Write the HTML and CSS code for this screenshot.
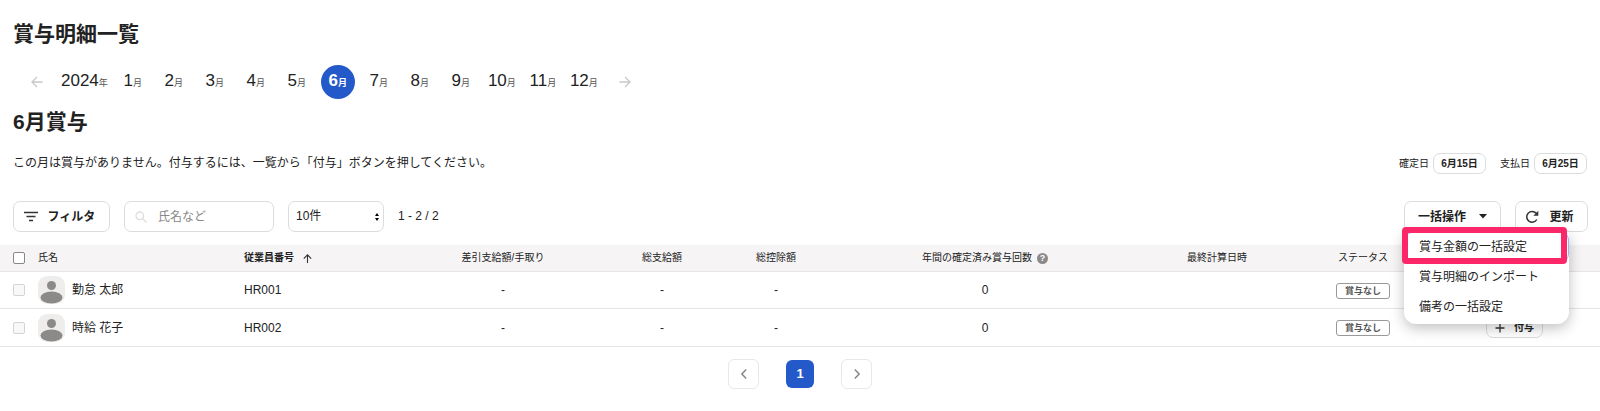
FILE: index.html
```html
<!DOCTYPE html>
<html lang="ja">
<head>
<meta charset="utf-8">
<title>賞与明細一覧</title>
<meta name="viewport" content="width=device-width, initial-scale=1">
<link rel="stylesheet" href="styles.css">
</head>
<body>
<svg class="defs" aria-hidden="true">
  <symbol id="avatar" viewBox="0 0 27 28">
    <rect width="27" height="28" rx="9" fill="#eeedeb"/>
    <circle cx="13.500" cy="9.500" r="4.500" fill="#8c8989"/>
    <ellipse cx="13.500" cy="21.500" rx="11" ry="6" fill="#8c8989"/>
  </symbol>
  <symbol id="plus" viewBox="0 0 10 10">
    <path d="M5 .5v9M.5 5h9" fill="none" stroke="#333" stroke-width="1.300"/>
  </symbol>
</svg>
<main class="page">
  <h1 class="title">賞与明細一覧</h1>

  <nav class="months" aria-label="対象月">
    <button class="month-arrow" aria-label="前の年"><svg width="12" height="12" viewBox="0 0 12 12"><path d="M11.500 6H1M6 1 1 6l5 5"/></svg></button>
    <span class="year">2024<small>年</small></span>
    <button class="month">1<small>月</small></button>
    <button class="month">2<small>月</small></button>
    <button class="month">3<small>月</small></button>
    <button class="month">4<small>月</small></button>
    <button class="month">5<small>月</small></button>
    <button class="month month-current" aria-current="true">6<small>月</small></button>
    <button class="month">7<small>月</small></button>
    <button class="month">8<small>月</small></button>
    <button class="month">9<small>月</small></button>
    <button class="month">10<small>月</small></button>
    <button class="month">11<small>月</small></button>
    <button class="month">12<small>月</small></button>
    <button class="month-arrow" aria-label="次の年"><svg width="12" height="12" viewBox="0 0 12 12"><path d="M.5 6H11M6 1l5 5-5 5"/></svg></button>
  </nav>

  <h2 class="title">6月賞与</h2>

  <div class="summary">
    <p class="lead">この月は賞与がありません。付与するには、一覧から「付与」ボタンを押してください。</p>
    <div class="dates">
      <span class="date"><span id="fix-date">確定日</span><button class="btn btn-small" aria-describedby="fix-date">6月15日</button></span>
      <span class="date"><span id="pay-date">支払日</span><button class="btn btn-small" aria-describedby="pay-date">6月25日</button></span>
    </div>
  </div>

  <div class="toolbar">
    <button class="btn filter"><svg width="14" height="11" viewBox="0 0 14 11"><path d="M0 1.500h14M2.500 5.500h9M5 9.500h4" stroke="#333" stroke-width="1.600"/></svg>フィルタ</button>
    <label class="search">
      <svg width="12" height="12" viewBox="0 0 12 12"><circle cx="4.800" cy="4.800" r="3.800"/><path d="m7.800 7.800 3.700 3.700"/></svg>
      <input type="search" placeholder="氏名など" aria-label="氏名などで検索">
    </label>
    <div class="per-page">
      <select aria-label="表示件数"><option>10件</option><option>20件</option><option>50件</option></select>
      <svg width="4" height="8" viewBox="0 0 4 8"><path d="M2 0l2 3H0zM2 8 0 5h4z"/></svg>
    </div>
    <span class="range">1 - 2 / 2</span>
    <div class="bulk">
      <button class="btn bulk-button" aria-haspopup="menu" aria-expanded="true">一括操作<svg width="8" height="5" viewBox="0 0 8 5"><path d="M0 0h8L4 4.500z" fill="#222"/></svg></button>
      <div class="menu" role="menu">
        <button class="menu-item menu-item-marked" role="menuitem">賞与金額の一括設定</button>
        <button class="menu-item" role="menuitem">賞与明細のインポート</button>
        <button class="menu-item" role="menuitem">備考の一括設定</button>
      </div>
    </div>
    <button class="btn refresh"><svg width="14" height="14" viewBox="0 0 14 14"><path d="M11.800 9.500A5.400 5.400 0 1 1 11.200 3.300L12.500 4.800" fill="none" stroke="#333" stroke-width="1.500"/><path d="M13.300.8v5H8.300z" fill="#333"/></svg>更新</button>
  </div>

  <table class="grid">
    <colgroup>
      <col class="c-check"><col class="c-name"><col class="c-number"><col class="c-net"><col class="c-amount"><col class="c-amount"><col class="c-count"><col class="c-time"><col class="c-status"><col class="c-action">
    </colgroup>
    <thead>
      <tr>
        <th class="check"><input type="checkbox" aria-label="すべて選択"></th>
        <th class="left">氏名</th>
        <th class="left sorted" aria-sort="ascending"><span class="th-inner">従業員番号<svg width="9" height="9" viewBox="0 0 9 9"><path d="M4.500 9V1M.8 4.600 4.500.9l3.700 3.700" fill="none" stroke="#333" stroke-width="1.100"/></svg></span></th>
        <th>差引支給額/手取り</th>
        <th>総支給額</th>
        <th>総控除額</th>
        <th><span class="th-inner th-help">年間の確定済み賞与回数<button class="help" aria-label="ヘルプ">?</button></span></th>
        <th>最終計算日時</th>
        <th>ステータス</th>
        <th></th>
      </tr>
    </thead>
    <tbody>
      <tr>
        <td class="check"><input type="checkbox" aria-label="勤怠 太郎を選択" disabled></td>
        <td class="left"><span class="person"><svg width="27" height="28"><use href="#avatar"/></svg>勤怠 太郎</span></td>
        <td class="left">HR001</td>
        <td>-</td><td>-</td><td>-</td><td>0</td><td></td>
        <td><span class="badge">賞与なし</span></td>
        <td><button class="btn btn-small grant"><svg width="10" height="10"><use href="#plus"/></svg>付与</button></td>
      </tr>
      <tr>
        <td class="check"><input type="checkbox" aria-label="時給 花子を選択" disabled></td>
        <td class="left"><span class="person"><svg width="27" height="28"><use href="#avatar"/></svg>時給 花子</span></td>
        <td class="left">HR002</td>
        <td>-</td><td>-</td><td>-</td><td>0</td><td></td>
        <td><span class="badge">賞与なし</span></td>
        <td><button class="btn btn-small grant"><svg width="10" height="10"><use href="#plus"/></svg>付与</button></td>
      </tr>
    </tbody>
  </table>

  <nav class="pager" aria-label="ページ">
    <button class="pager-step" aria-label="前へ"><svg width="6" height="10" viewBox="0 0 6 10"><path d="M5.200.6.9 5l4.300 4.400"/></svg></button>
    <button class="pager-current" aria-current="page">1</button>
    <button class="pager-step" aria-label="次へ"><svg width="6" height="10" viewBox="0 0 6 10"><path d="M.8.6 5.100 5 .8 9.400"/></svg></button>
  </nav>
</main>
</body>
</html>
```

FILE: styles.css
```css
*,
*::after {
  box-sizing: border-box;
}

body {
  margin: 0;
  background: #fff;
  color: #222;
  font: 12px/18px "Liberation Sans", "Noto Sans CJK JP", sans-serif;
}

button,
input,
select {
  margin: 0;
  color: inherit;
  font: inherit;
}

button {
  padding: 0;
  border: 0;
  background: none;
  cursor: pointer;
}

svg {
  display: block;
  flex: none;
}

.defs {
  position: absolute;
  width: 0;
  height: 0;
}

.page {
  padding-top: 20px;
}

.title {
  margin: 0;
  padding: 0 13px;
  font-size: 21px;
  line-height: 28px;
}

/* Month switcher */
.months {
  display: flex;
  align-items: center;
  gap: 7px;
  margin: 17px 0 9px;
  padding-left: 20px;
}

.month,
.month-arrow {
  width: 34px;
  height: 34px;
  border-radius: 50%;
  white-space: nowrap;
}

.year,
.month {
  font-size: 17px;
}

.year {
  margin-right: 1px;
}

.months small {
  color: #555;
  font-size: 9px;
}

.month-current,
.month-current small {
  background: #2459c9;
  color: #fff;
  font-weight: bold;
}

.months .month-current small {
  color: #fff;
}

.month-arrow {
  display: grid;
  place-items: center;
}

.month-arrow path {
  fill: none;
  stroke: #c8c8c8;
  stroke-width: 1.300;
}

/* Buttons */
.btn {
  display: inline-flex;
  align-items: center;
  justify-content: center;
  height: 31px;
  border: 1px solid #dcdcdc;
  border-radius: 7px;
  background: #fff;
  font-weight: bold;
  white-space: nowrap;
}

.btn-small {
  height: 21px;
  padding: 0 7px;
  font-size: 10px;
}

/* Description and dates */
.summary {
  display: flex;
  align-items: flex-end;
  justify-content: space-between;
  margin-top: 17px;
  padding: 0 13px;
}

.lead {
  margin: 0 0 2px;
}

.dates {
  display: flex;
  gap: 14px;
  font-size: 10px;
}

.date {
  display: flex;
  align-items: center;
  gap: 4px;
}

.date .btn {
  width: 53px;
}

/* Toolbar */
.toolbar {
  display: flex;
  align-items: center;
  gap: 14px;
  margin: 27px 0 13px;
  padding: 0 12px 0 13px;
}

.filter {
  gap: 10px;
  width: 97px;
  padding-right: 4px;
}

.search {
  display: flex;
  align-items: center;
  gap: 11px;
  width: 150px;
  height: 31px;
  padding: 0 10px;
  border: 1px solid #dcdcdc;
  border-radius: 7px;
}

.search svg {
  fill: none;
  stroke: #ddd;
  stroke-width: 1.300;
}

.search input {
  flex: 1;
  min-width: 0;
  padding: 0;
  border: 0;
  outline: 0;
  background: none;
}

.search input::placeholder {
  color: #888;
}

.per-page {
  display: grid;
  align-items: center;
  width: 96px;
}

.per-page select,
.per-page svg {
  grid-area: 1 / 1;
}

.per-page select {
  width: 100%;
  height: 31px;
  padding: 0 7px 2px;
  border: 1px solid #dcdcdc;
  border-radius: 7px;
  appearance: none;
  background: #fff;
}

.per-page svg {
  justify-self: end;
  margin-right: 5px;
  pointer-events: none;
}

.range {
  padding-bottom: 2px;
}

.bulk {
  position: relative;
  margin-left: auto;
}

.bulk-button {
  gap: 13px;
  width: 97px;
}

.refresh {
  gap: 10px;
  width: 73px;
  padding-right: 4px;
}

.menu {
  position: absolute;
  z-index: 1;
  top: 31px;
  left: 0;
  width: 165px;
  padding-bottom: 2px;
  border-radius: 0 0 12px 12px;
  background: #fff;
  box-shadow: 0 4px 14px rgba(0, 0, 0, 0.25);
}

.menu-item {
  display: block;
  width: 100%;
  height: 30px;
  padding: 0 15px;
  text-align: left;
  white-space: nowrap;
}

.menu-item-marked {
  border-radius: 8px;
  box-shadow: inset 0 0 0 1px #9bb4ee;
}

.menu-item-marked::after {
  position: absolute;
  top: -5px;
  left: -2px;
  width: 165px;
  height: 37px;
  border: 6px solid #fb2768;
  border-radius: 4px;
  content: "";
  pointer-events: none;
}

/* Table */
.grid {
  width: 100%;
  border-spacing: 0;
  table-layout: fixed;
}

.c-check { width: 38px; }
.c-name { width: 206px; }
.c-number { width: 157px; }
.c-net { width: 204px; }
.c-amount { width: 114px; }
.c-count { width: 304px; }
.c-time { width: 160px; }
.c-status { width: 132px; }
.c-action { width: 171px; }

.grid th,
.grid td {
  padding: 0;
  border-bottom: 1px solid #e5e5e5;
  text-align: center;
  white-space: nowrap;
}

.grid th {
  height: 27px;
  background: #f6f4f5;
  font-size: 10px;
  font-weight: normal;
}

.grid td {
  height: 37px;
}

.grid tr:last-child td {
  height: 38px;
}

.grid .left {
  text-align: left;
}

.grid .sorted {
  font-weight: bold;
}

.grid .check {
  padding-left: 13px;
  text-align: left;
}

.check input {
  display: block;
  width: 12px;
  height: 12px;
  border: 1px solid #888;
  border-radius: 2px;
  appearance: none;
  background: #fff;
}

.check input:disabled {
  border-color: #d4d4d4;
  background: #f8f8f8;
}

.th-inner {
  display: inline-flex;
  align-items: center;
  gap: 9px;
  vertical-align: middle;
}

.th-help {
  gap: 5px;
}

.help {
  width: 11px;
  height: 11px;
  border-radius: 50%;
  background: #8c8989;
  color: #fff;
  font-size: 9px;
  font-weight: bold;
  line-height: 11px;
}

.person {
  display: flex;
  align-items: center;
  gap: 7px;
}

.badge {
  display: inline-block;
  width: 54px;
  border: 1px solid #999;
  border-radius: 3px;
  color: #555;
  font-size: 9px;
  font-weight: bold;
  line-height: 14px;
  vertical-align: middle;
}

.grant {
  gap: 9px;
  width: 57px;
  vertical-align: middle;
}

/* Pager */
.pager {
  display: flex;
  align-items: center;
  justify-content: center;
  gap: 27px;
  padding: 12px 0;
}

.pager-step {
  display: grid;
  place-items: center;
  width: 31px;
  height: 30px;
  border: 1px solid #e8e8e8;
  border-radius: 6px;
}

.pager-step path {
  fill: none;
  stroke: #888;
  stroke-width: 1.500;
}

.pager-current {
  width: 28px;
  height: 28px;
  border-radius: 6px;
  background: #2459c9;
  color: #fff;
  font-size: 13px;
  font-weight: bold;
}
```
